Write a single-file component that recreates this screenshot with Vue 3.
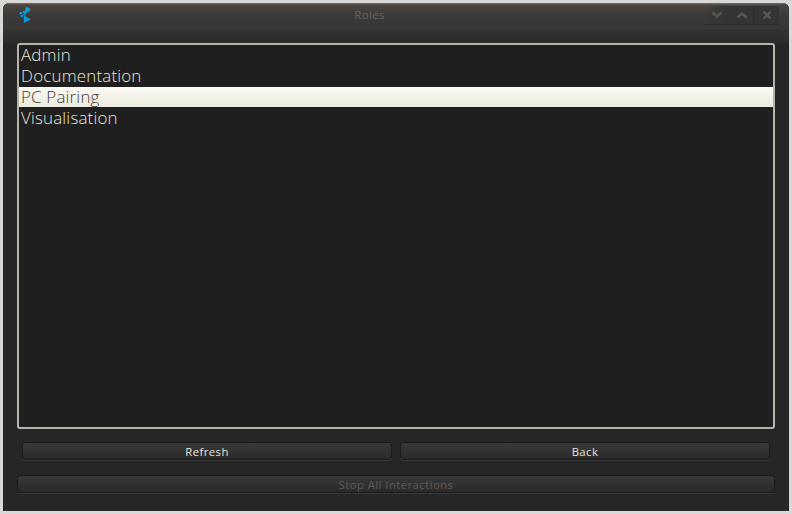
<script setup>
const roles = [
  { name: 'Admin' },
  { name: 'Documentation' },
  { name: 'PC Pairing', selected: true },
  { name: 'Visualisation' }
]
</script>

<template>
  <div class="screen">
    <div class="window">
      <header class="titlebar">
        <svg class="logo" width="13" height="17" viewBox="2.500 1 12 17" preserveAspectRatio="none">
          <path d="M9 1.500c2.200-.8 4.200.6 3.800 2.600-.3 1.500-1.800 2.200-3 2.600L8.600 8.600 7.200 8l.8-2.400C8.300 4.300 7.800 2.300 9 1.500z" fill="#0d9ad6" />
          <path d="M7 9.500l6.500 3.800L7 17z" fill="#0d9ad6" />
          <rect x="3" y="6" width="2.500" height="2.500" fill="#0d9ad6" />
          <rect x="6" y="5" width="2" height="2" fill="#0d9ad6" />
          <rect x="4" y="9" width="2" height="2" fill="#0d9ad6" />
          <rect x="6.500" y="8" width="1.500" height="1.500" fill="#0d9ad6" />
        </svg>
        <span class="title">Roles</span>
        <div class="controls">
          <span class="control">
            <svg width="12" height="8" viewBox="0 0 12 8"><path d="M1.500 1.500L6 5.500l4.500-4" fill="none" stroke="#5a5855" stroke-width="2.400" /></svg>
          </span>
          <span class="control">
            <svg width="12" height="8" viewBox="0 0 12 8"><path d="M1.500 6.500L6 2.500l4.500 4" fill="none" stroke="#5a5855" stroke-width="2.400" /></svg>
          </span>
          <span class="control close">
            <svg width="10" height="10" viewBox="0 0 10 10"><path d="M1.500 1.500l7 7M8.500 1.500l-7 7" fill="none" stroke="#5a5855" stroke-width="2.400" /></svg>
          </span>
        </div>
      </header>

      <main class="content">
        <ul class="list">
          <li v-for="role in roles" :key="role.name" class="row" :class="{ selected: role.selected }">{{ role.name }}</li>
        </ul>
        <div class="actions">
          <button class="btn" type="button">Refresh</button>
          <button class="btn" type="button">Back</button>
        </div>
        <button class="btn stop" type="button" disabled>Stop All Interactions</button>
      </main>
    </div>
  </div>
</template>

<style>
html, body { margin: 0; background: #e4e4e2; }
</style>

<style scoped>
.screen {
  width: 792px;
  height: 514px;
  box-sizing: border-box;
  padding: 3px;
  background: #d8d8d6;
  font-family: "Open Sans", "Noto Sans", sans-serif;
}
.window {
  height: 100%;
  box-sizing: border-box;
  border-radius: 6px 6px 0 0;
  background: #262626;
  display: flex;
  flex-direction: column;
  overflow: hidden;
}
.titlebar {
  position: relative;
  height: 40px;
  flex: none;
  background: linear-gradient(#7d6f65 0, #4a4541 2px, #3c3a38 12px, #383735 26px, #333231 27px, #2c2c2b 40px);
  display: flex;
  justify-content: center;
  box-sizing: border-box;
  padding: 5px 53px 0 0;
}
.logo {
  position: absolute;
  left: 16px;
  top: 4px;
}
.title {
  font-size: 11.500px;
  line-height: 14px;
  color: #666562;
  letter-spacing: 0.3px;
}
.controls {
  position: absolute;
  right: 10px;
  top: 3px;
  height: 18px;
  display: flex;
  background: linear-gradient(90deg, rgba(53,52,50,0), #353432 30%);
  box-shadow: 0 1px 0 #2c2c2b;
}
.control {
  width: 25px;
  box-sizing: border-box;
  display: flex;
  align-items: center;
  justify-content: center;
}
.close { border-left: 1px solid #2c2c2b; }
.content {
  flex: 1;
  min-height: 0;
  padding: 0 14px;
  display: flex;
  flex-direction: column;
}
.list {
  list-style: none;
  margin: 0;
  padding: 0;
  height: 386px;
  flex: none;
  box-sizing: border-box;
  border: 2px solid #b4b4a8;
  border-radius: 3px;
  background: #1f1f1f;
  overflow: hidden;
}
.row {
  height: 21px;
  line-height: 19px;
  padding-left: 2px;
  font-size: 16.900px;
  letter-spacing: 0.2px;
  font-weight: 300;
  color: #e9e6d8;
}
.row.selected {
  height: 20px;
  margin-bottom: 1px;
  background: linear-gradient(#fbfaf4, #ecebdf);
  color: #3c3c35;
}
.actions {
  display: flex;
  gap: 8px;
  padding: 13px 5px 15px;
}
.btn {
  flex: 1;
  height: 18px;
  padding: 1px 0 0;
  box-sizing: border-box;
  border: 1px solid #1b1b1b;
  border-radius: 3px;
  background: linear-gradient(#3a3938, #2b2a2a);
  box-shadow: 0 1px 0 #3a3a3a;
  color: #e6e4da;
  font-family: inherit;
  font-size: 11.300px;
  line-height: 16px;
  letter-spacing: 0.45px;
}
.stop {
  flex: none;
  width: 100%;
  color: #5c5b59;
}
</style>
